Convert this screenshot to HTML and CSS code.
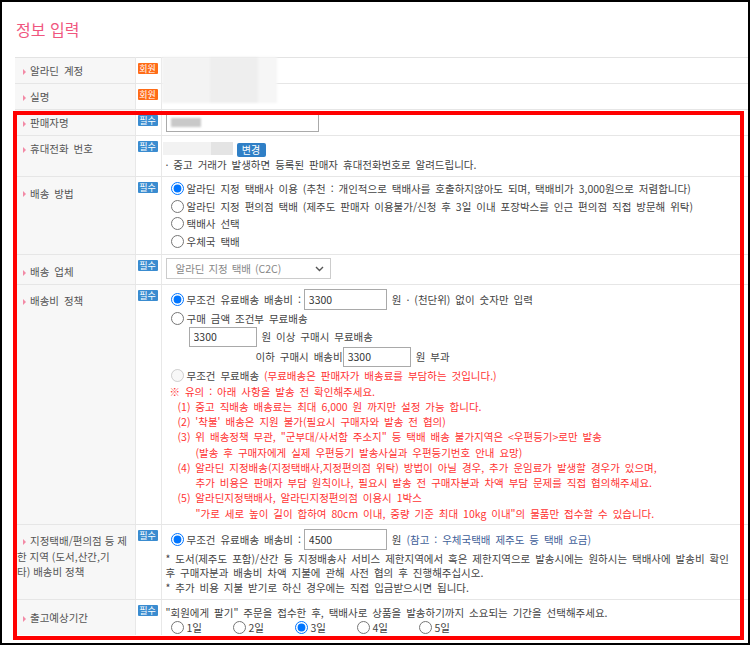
FILE: index.html
```html
<!DOCTYPE html>
<html lang="ko">
<head>
  <meta charset="UTF-8" />
  <title>정보 입력</title>
  <link rel="stylesheet" href="styles.css">
</head>
<body>
<div class="frame">
  <h2 class="title">정보 입력</h2>

  <div class="form-wrap">
    <table class="info">
      <colgroup><col class="c-label"><col class="c-badge"><col></colgroup>
      <tr>
        <th>알라딘 계정</th>
        <td class="badge-cell"><span class="badge member">회원</span></td>
        <td class="val"></td>
      </tr>
      <tr>
        <th>실명</th>
        <td class="badge-cell"><span class="badge member">회원</span></td>
        <td class="val"></td>
      </tr>
      <tr>
        <th>판매자명</th>
        <td class="badge-cell"><span class="badge req">필수</span></td>
        <td class="val pad-name">
          <div class="textbox name-box"><span class="blur-text"></span></div>
        </td>
      </tr>
      <tr>
        <th>휴대전화 번호</th>
        <td class="badge-cell"><span class="badge req">필수</span></td>
        <td class="val pad-phone">
          <div class="phone-line">
            <span class="phone-blur"><i></i><i></i></span>
            <button class="btn-change">변경</button>
          </div>
          <div class="line15">· 중고 거래가 발생하면 등록된 판매자 휴대전화번호로 알려드립니다.</div>
        </td>
      </tr>
      <tr class="multi">
        <th>배송 방법</th>
        <td class="badge-cell"><span class="badge req">필수</span></td>
        <td class="val pad-method">
          <label class="opt"><input type="radio" name="method" checked>알라딘 지정 택배사 이용 (추천 : 개인적으로 택배사를 호출하지않아도 되며, 택배비가 3,000원으로 저렴합니다)</label>
          <label class="opt"><input type="radio" name="method">알라딘 지정 편의점 택배 (제주도 판매자 이용불가/신청 후 3일 이내 포장박스를 인근 편의점 직접 방문해 위탁)</label>
          <label class="opt"><input type="radio" name="method">택배사 선택</label>
          <label class="opt"><input type="radio" name="method">우체국 택배</label>
        </td>
      </tr>
      <tr class="multi">
        <th>배송 업체</th>
        <td class="badge-cell"><span class="badge req">필수</span></td>
        <td class="val pad-company">
          <div class="select">
            <span>알라딘 지정 택배 (C2C)</span>
            <svg width="9" height="6" viewBox="0 0 9 6"><polyline points="1,1 4.5,4.5 8,1" fill="none" stroke="#555" stroke-width="1.4"/></svg>
          </div>
        </td>
      </tr>
      <tr class="multi">
        <th>배송비 정책</th>
        <td class="badge-cell"><span class="badge req">필수</span></td>
        <td class="val pad-fee">
          <label class="opt h21"><input type="radio" name="fee" checked>무조건 유료배송 배송비 :<input class="num wide" type="text" value="3300">원 · (천단위) 없이 숫자만 입력</label>
          <label class="opt h17"><input type="radio" name="fee">구매 금액 조건부 무료배송</label>
          <div class="opt h20 in-1"><input class="num" type="text" value="3300">원 이상 구매시 무료배송</div>
          <div class="opt h20 in-2">이하 구매시 배송비<input class="num" type="text" value="3300">원 부과</div>
          <label class="opt h17"><input type="radio" name="fee" disabled>무조건 무료배송&nbsp;<span class="red">(무료배송은 판매자가 배송료를 부담하는 것입니다.)</span></label>
          <div class="notes">
            <p class="n0">※ 유의 : 아래 사항을 발송 전 확인해주세요.</p>
            <p class="n1">(1) 중고 직배송 배송료는 최대 6,000 원 까지만 설정 가능 합니다.</p>
            <p class="n1">(2) '착불' 배송은 지원 불가(필요시 구매자와 발송 전 협의)</p>
            <p class="n1">(3) 위 배송정책 무관, "군부대/사서함 주소지" 등 택배 배송 불가지역은 &lt;우편등기&gt;로만 발송</p>
            <p class="n2">(발송 후 구매자에게 실제 우편등기 발송사실과 우편등기번호 안내 요망)</p>
            <p class="n1">(4) 알라딘 지정배송(지정택배사,지정편의점 위탁) 방법이 아닐 경우, 추가 운임료가 발생할 경우가 있으며,</p>
            <p class="n2">추가 비용은 판매자 부담 원칙이나, 필요시 발송 전 구매자분과 차액 부담 문제를 직접 협의해주세요.</p>
            <p class="n1">(5) 알라딘지정택배사, 알라딘지정편의점 이용시 1박스</p>
            <p class="n2">"가로 세로 높이 길이 합하여 80cm 이내, 중량 기준 최대 10kg 이내"의 물품만 접수할 수 있습니다.</p>
          </div>
        </td>
      </tr>
      <tr class="multi">
        <th class="wrap">지정택배/편의점 등 제<br>한 지역 (도서,산간,기<br>타) 배송비 정책</th>
        <td class="badge-cell"><span class="badge req">필수</span></td>
        <td class="val pad-area">
          <label class="opt h20"><input type="radio" name="area" checked>무조건 유료배송 배송비 :<input class="num wide" type="text" value="4500">원&nbsp;<span class="ref">(참고 : 우체국택배 제주도 등 택배 요금)</span></label>
          <div class="area-notes">
            <p>* 도서(제주도 포함)/산간 등 지정배송사 서비스 제한지역에서 혹은 제한지역으로 발송시에는 원하시는 택배사에 발송비 확인</p>
            <p>후 구매자분과 배송비 차액 지불에 관해 사전 협의 후 진행해주십시오.</p>
            <p>* 추가 비용 지불 받기로 하신 경우에는 직접 입금받으시면 됩니다.</p>
          </div>
        </td>
      </tr>
      <tr class="multi last">
        <th>출고예상기간</th>
        <td class="badge-cell"><span class="badge req">필수</span></td>
        <td class="val pad-days">
          <div class="line15">"회원에게 팔기" 주문을 접수한 후, 택배사로 상품을 발송하기까지 소요되는 기간을 선택해주세요.</div>
          <div class="days">
            <label class="day"><input type="radio" name="day">1일</label>
            <label class="day"><input type="radio" name="day">2일</label>
            <label class="day"><input type="radio" name="day" checked>3일</label>
            <label class="day"><input type="radio" name="day">4일</label>
            <label class="day"><input type="radio" name="day">5일</label>
          </div>
        </td>
      </tr>
    </table>

    <!-- blurred account info over the first two rows -->
    <div class="account-blur"><i></i><i></i><i></i></div>
    <!-- red highlight box -->
    <div class="highlight"></div>
  </div>
</div>
</body>
</html>
```

FILE: styles.css
```css
body {
  margin: 0;
  font-family: "Noto Sans CJK KR", "Noto Sans", sans-serif;
  font-size: 10.5px;
  word-spacing: 2px;
  color: #444;
}
.frame {
  width: 750px;
  height: 645px;
  border: 2px solid #000;
  box-sizing: border-box;
  overflow: hidden;
  background: #fff;
}
.title {
  margin: 0;
  height: 55px;
  box-sizing: border-box;
  padding: 17px 0 0 14px;
  font-size: 16px;
  line-height: 20px;
  font-weight: normal;
  word-spacing: 0;
  color: #f0567e;
}
.form-wrap {
  position: relative;
  margin-left: 13px;
}
.info {
  width: 733px;
  border-collapse: collapse;
  table-layout: fixed;
  border-top: 1px solid #e3e3e3;
}
.c-label {
  width: 120px;
}
.c-badge {
  width: 26px;
}
.info th {
  background: #f7f7f7;
  text-align: left;
  font-weight: normal;
  color: #555;
  vertical-align: top;
  padding: 5px 2px 5px 2px;
  line-height: 15px;
  white-space: nowrap;
  border-bottom: 1px solid #e6e6e6;
  border-right: 1px solid #e8e8e8;
}
.info tr.multi th {
  padding-top: 8.5px;
}
.info tr.last th {
  padding-top: 10px;
}
.info th.wrap {
  line-height: 15.5px;
  word-spacing: 0;
}
.info th::before {
  content: "";
  display: inline-block;
  border-left: 3px solid #f38aa6;
  border-top: 3px solid transparent;
  border-bottom: 3px solid transparent;
  margin: 0 4px 1px 6px;
  vertical-align: middle;
}
.badge-cell {
  vertical-align: top;
  padding: 5px 0 0 2px;
  border-bottom: 1px solid #e6e6e6;
  border-right: 1px solid #e8e8e8;
}
.badge {
  display: block;
  width: 20px;
  height: 11px;
  line-height: 11px;
  font-size: 9px;
  word-spacing: 0;
  color: #fff;
  text-align: center;
  border-radius: 1px;
}
.badge.member {
  background: #ff6c17;
}
.badge.req {
  background: #3a8cd0;
}
.val {
  vertical-align: top;
  padding: 0 4px;
  border-bottom: 1px solid #e6e6e6;
  color: #444;
}
.info tr.last td, .info tr.last th {
  border-bottom: none;
}

/* rows */
.pad-name {
  padding-top: 3px;
  padding-bottom: 3px;
}
.textbox {
  height: 19px;
  border: 1px solid #aaa;
  box-sizing: border-box;
  display: flex;
  align-items: center;
  padding-left: 4px;
}
.name-box {
  width: 153px;
}
.blur-text {
  width: 30px;
  height: 9px;
  background: #c9c9c9;
  filter: blur(1px);
}
.pad-phone {
  padding-top: 4px;
  padding-bottom: 4px;
}
.phone-line {
  display: flex;
  align-items: center;
  height: 17px;
}
.phone-blur {
  display: flex;
  height: 13px;
  margin-left: -3px;
  filter: blur(0.6px);
}
.phone-blur i {
  display: block;
  width: 48px;
  background: #f2f2f2;
}
.phone-blur i + i {
  width: 22px;
  background: #e4e4e4;
}
.btn-change {
  margin: 3px 0 0 4px;
  width: 29px;
  height: 14px;
  padding: 0;
  border: none;
  border-radius: 2px;
  background: #2f7fc6;
  color: #fff;
  font-family: inherit;
  font-size: 10px;
  line-height: 14px;
}
.line15 {
  line-height: 15px;
  white-space: nowrap;
}
.pad-method {
  padding-top: 3px;
  padding-bottom: 4px;
}
.opt {
  display: flex;
  align-items: center;
  height: 17.6px;
  white-space: nowrap;
}
.opt input[type="radio"] {
  margin: 0 3px 0 5px;
  accent-color: #0075ff;
}
.pad-company {
  padding-top: 3px;
  padding-bottom: 4px;
}
.select {
  width: 165px;
  height: 21px;
  box-sizing: border-box;
  border: 1px solid #ccc;
  display: flex;
  align-items: center;
  justify-content: space-between;
  padding: 0 6px 0 9px;
  color: #888;
  word-spacing: 1px;
}
.pad-fee {
  padding-top: 4px;
  padding-bottom: 3px;
}
.h21 { height: 21px; }
.h20 { height: 20px; }
.h17 { height: 17px; }
.num {
  width: 68px;
  height: 20px;
  box-sizing: border-box;
  border: 1px solid #a9a9a9;
  padding: 0 4px;
  margin: 0 5px 0 2px;
  font-family: inherit;
  font-size: 10.5px;
  color: #333;
}
.num.wide {
  width: 83px;
  height: 21px;
  margin-left: 3px;
}
.in-1 {
  padding-left: 23px;
}
.in-1 .num {
  margin-left: 0;
}
.in-2 {
  padding-left: 90px;
}
.in-2 .num {
  margin-left: 0;
}
.red {
  color: #f33;
}
.notes {
  color: #f33;
  line-height: 15.2px;
  white-space: nowrap;
}
.notes p {
  margin: 0;
}
.notes .n0 { padding-left: 4px; }
.notes .n1 { padding-left: 12px; }
.notes .n2 { padding-left: 30px; }
.pad-area {
  padding-top: 5px;
  padding-bottom: 4px;
}
.ref {
  color: #3f5e98;
}
.area-notes {
  margin-top: 2px;
  line-height: 14.5px;
  white-space: nowrap;
}
.area-notes p {
  margin: 0;
}
.pad-days {
  padding-top: 5px;
}
.days {
  display: flex;
  height: 15px;
}
.day {
  display: flex;
  align-items: center;
  width: 62px;
  white-space: nowrap;
}
.day input {
  margin: 0 3px 0 5px;
  accent-color: #0075ff;
}

/* overlays */
.account-blur {
  position: absolute;
  left: 147px;
  top: 0;
  width: 115px;
  height: 46px;
  display: flex;
  filter: blur(0.8px);
}
.account-blur i {
  display: block;
  width: 48px;
  background: #f3f3f3;
}
.account-blur i + i {
  background: #eeeeee;
}
.account-blur i + i + i {
  width: 19px;
  background: #f6f6f6;
}
.highlight {
  position: absolute;
  left: -2px;
  top: 54px;
  width: 731px;
  height: 529px;
  box-sizing: border-box;
  border: 4px solid #f00;
  pointer-events: none;
}
```
